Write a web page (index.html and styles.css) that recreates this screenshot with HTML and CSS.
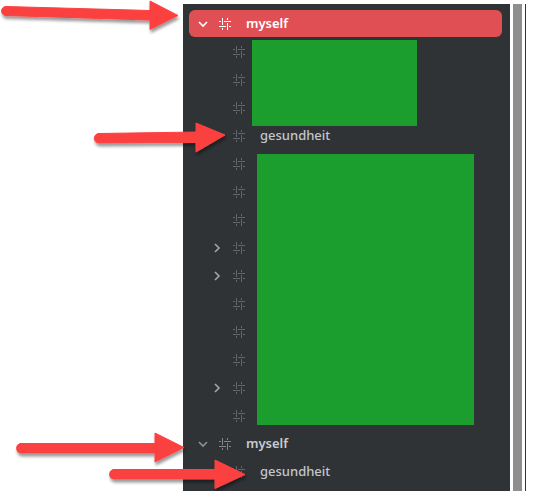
FILE: index.html
```html
<!DOCTYPE html>
<html lang="en">
<head>
  <meta charset="UTF-8" />
  <title>Channels</title>
  <link rel="stylesheet" href="styles.css">
</head>
<body>
  <svg width="0" height="0" class="defs">
    <symbol id="hash" viewBox="0 0 12 12">
      <path d="M0 3.5H2M5 3.5H12M0 8.5H7M10 8.5H12M3.5 0V7M3.5 10V12M8.5 0V2M8.5 5V12" fill="none" stroke="currentColor" stroke-width="1"/>
    </symbol>
    <symbol id="down" viewBox="0 0 10 10">
      <path d="M1 3L5 7L9 3" fill="none" stroke="currentColor" stroke-width="1.6"/>
    </symbol>
    <symbol id="right" viewBox="0 0 10 10">
      <path d="M3 1L7 5L3 9" fill="none" stroke="currentColor" stroke-width="1.6"/>
    </symbol>
  </svg>

  <div class="page">
    <aside class="panel">
      <div class="row category active">
        <svg class="chevron"><use href="#down"/></svg>
        <svg class="hash"><use href="#hash"/></svg>
        <span class="name">myself</span>
      </div>
      <div class="row channel"><svg class="hash"><use href="#hash"/></svg></div>
      <div class="row channel"><svg class="hash"><use href="#hash"/></svg></div>
      <div class="row channel"><svg class="hash"><use href="#hash"/></svg></div>
      <div class="row channel"><svg class="hash"><use href="#hash"/></svg><span class="label">gesundheit</span></div>
      <div class="row channel"><svg class="hash"><use href="#hash"/></svg></div>
      <div class="row channel"><svg class="hash"><use href="#hash"/></svg></div>
      <div class="row channel"><svg class="hash"><use href="#hash"/></svg></div>
      <div class="row channel nested"><svg class="chevron"><use href="#right"/></svg><svg class="hash"><use href="#hash"/></svg></div>
      <div class="row channel nested"><svg class="chevron"><use href="#right"/></svg><svg class="hash"><use href="#hash"/></svg></div>
      <div class="row channel"><svg class="hash"><use href="#hash"/></svg></div>
      <div class="row channel"><svg class="hash"><use href="#hash"/></svg></div>
      <div class="row channel"><svg class="hash"><use href="#hash"/></svg></div>
      <div class="row channel nested"><svg class="chevron"><use href="#right"/></svg><svg class="hash"><use href="#hash"/></svg></div>
      <div class="row channel"><svg class="hash"><use href="#hash"/></svg></div>
      <div class="row category">
        <svg class="chevron"><use href="#down"/></svg>
        <svg class="hash"><use href="#hash"/></svg>
        <span class="name">myself</span>
      </div>
      <div class="row channel"><svg class="hash"><use href="#hash"/></svg><span class="label">gesundheit</span></div>

      <!-- green redaction blocks -->
      <div class="redact redact-top"></div>
      <div class="redact redact-main"></div>
    </aside>
    <div class="gutter"></div>
    <div class="scrollbar"></div>
    <div class="edge"></div>
  </div>

  <!-- red annotation arrows -->
  <svg class="arrows" width="548" height="491" viewBox="0 0 548 491">
    <defs>
      <filter id="shadow" x="-10%" y="-30%" width="120%" height="170%">
        <feDropShadow dx="1" dy="3" stdDeviation="1.5" flood-color="#000" flood-opacity="0.4"/>
      </filter>
    </defs>
    <g fill="#fb4141" stroke="#fb4141" stroke-width="1" stroke-linejoin="round" filter="url(#shadow)">
      <path d="M6 6.5L150 10.5V1L178 15.5L150 29.5V20L6 15.5A4.5 4.5 0 0 1 6 6.5Z"/>
      <path d="M99 133.5L196 132V123L225 135L196 152V142.5L99 143A4.5 4.5 0 0 1 99 133.5Z"/>
      <path d="M20 443.5H155V433L184 447.5L155 462V453H20A5 5 0 0 1 20 443.5Z"/>
      <path d="M113 469.5H215V460L245 474.5L215 488.5V479H113A5 5 0 0 1 113 469.5Z"/>
    </g>
  </svg>
</body>
</html>
```

FILE: styles.css
```css
* {
  box-sizing: border-box;
  margin: 0;
  padding: 0;
}

body {
  background: #fff;
  font-family: "Noto Sans", sans-serif;
  overflow: hidden;
}

.defs {
  position: absolute;
}

.page {
  display: flex;
  height: 491px;
  padding: 4px 0 0 183px;
}

/* Channel list */
.panel {
  position: relative;
  width: 327px;
  background: #2f3336;
  padding-top: 6px;
}

.row {
  display: flex;
  align-items: center;
  height: 28px;
}

.hash {
  width: 12px;
  height: 12px;
  color: #63666b;
  flex: none;
}

.chevron {
  width: 10px;
  height: 10px;
  color: #a3a6aa;
  flex: none;
}

.category {
  margin: 0 8px 0 6px;
  padding-left: 9px;
  border-radius: 6px;
}
.category .chevron {
  margin-right: 11px;
  color: #8e9297;
}
.category .hash {
  color: #84878c;
}
.category .name {
  margin: 0 0 2px 15px;
  font-size: 13px;
  font-weight: 600;
  color: #c8cacd;
}
.category.active {
  height: 27px;
  margin-bottom: 1px;
  background: #e04f54;
}
.category.active .chevron,
.category.active .hash,
.category.active .name {
  color: #fff;
}

.channel {
  padding-left: 50px;
}
.channel.nested {
  padding-left: 29px;
}
.channel.nested .chevron {
  margin-right: 11px;
}
.label {
  margin: 0 0 2px 15px;
  font-size: 13px;
  font-weight: 500;
  color: #c4c6c9;
}

/* Green blocks pasted over the channel names */
.redact {
  position: absolute;
  background: #1b9e2d;
}
.redact-top {
  left: 69px;
  top: 36px;
  width: 165px;
  height: 86px;
}
.redact-main {
  left: 74px;
  top: 150px;
  width: 217px;
  height: 271px;
}

/* Window edge */
.gutter {
  width: 3px;
}
.scrollbar {
  width: 9px;
  background: #8e8e8e;
}
.edge {
  width: 1px;
  margin-left: 3px;
  background: #333;
}

.arrows {
  position: absolute;
  left: 0;
  top: 0;
}
```
